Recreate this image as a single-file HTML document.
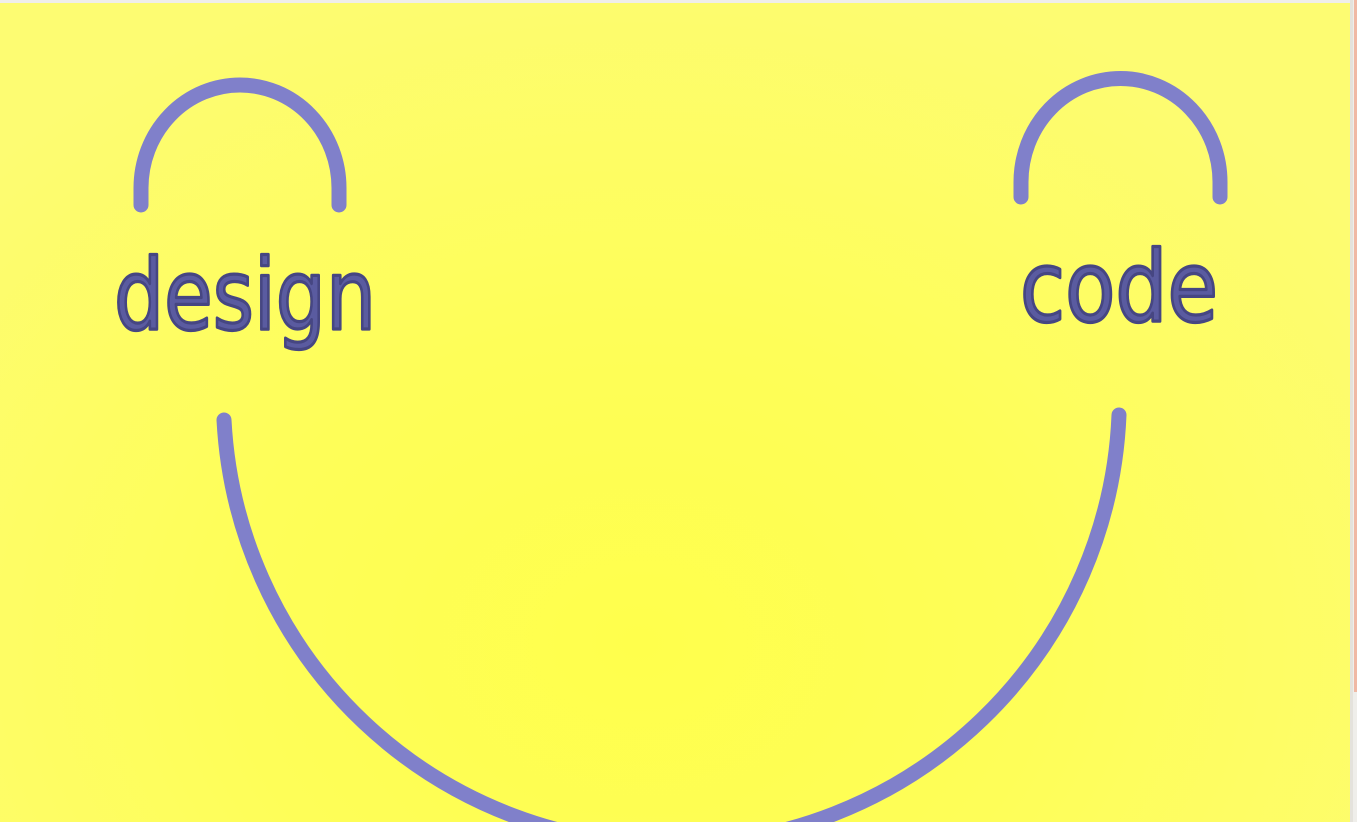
<!DOCTYPE html>
<html><head><meta charset="utf-8"><style>
html,body{margin:0;padding:0;width:1357px;height:822px;overflow:hidden;background:#efeeea;}
#card{position:absolute;left:0;top:3px;width:1350px;height:819px;background:radial-gradient(ellipse 900px 700px at 640px 640px,#ffff4c 0%,#fefe58 45%,#fdfc72 100%);}
#edge{position:absolute;left:1350px;top:0;width:3px;height:822px;background:#e4e2dc;}
#pink{position:absolute;left:1354px;top:0;width:3px;height:692px;background:#f0b8a4;}
svg{position:absolute;left:0;top:0;}
</style></head><body>
<div id="card"></div><div id="edge"></div><div id="pink"></div>
<svg width="1357" height="822" viewBox="0 0 1357 822">
<g fill="none" stroke="#8080ca" stroke-width="15" stroke-linecap="round">
<path d="M141 205 L141 188 A99 103 0 0 1 339 188 L339 205"/>
<path d="M1021 197 L1021 182 A99 103 0 0 1 1220 182 L1220 197"/>
<path d="M224 420 A448 448 0 0 0 1119 415"/>
</g>
<g fill="#5a5ba0" stroke="#464682" stroke-width="3.2" stroke-linejoin="round" font-family="DejaVu Sans, sans-serif" font-size="98">
<text x="114" y="329" textLength="262" lengthAdjust="spacingAndGlyphs">design</text>
<text x="1020" y="321" textLength="198" lengthAdjust="spacingAndGlyphs">code</text>
</g>
</svg>
</body></html>
